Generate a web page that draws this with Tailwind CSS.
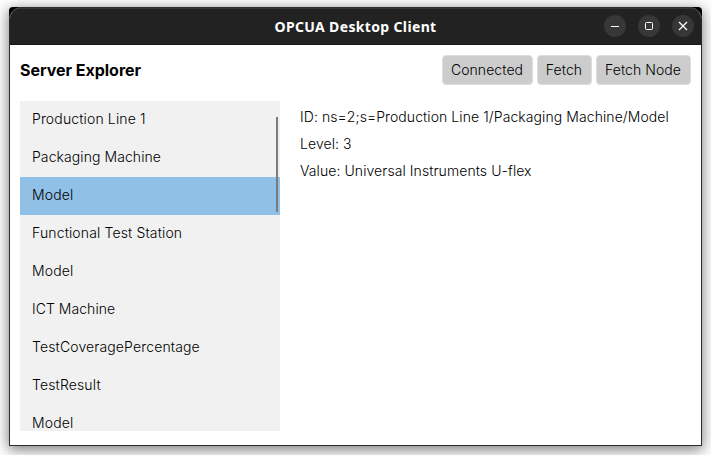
<!DOCTYPE html>
<html lang="en">
<head>
<meta charset="utf-8">
<title>OPCUA Desktop Client</title>
<script src="https://cdn.jsdelivr.net/npm/@tailwindcss/browser@4"></script>
</head>
<body class="h-[455px] w-[711px] overflow-hidden bg-white pt-[7px] pl-[9px] font-['Inter',sans-serif] text-[14px] font-light text-black">
<div class="h-[439px] w-[693px] rounded-t-[4px] bg-black shadow-[0_3px_14px_1px_rgba(0,0,0,0.5)]">
  <div class="flex h-full flex-col overflow-hidden rounded-t-[12px] border border-[#2d2d2d] bg-white">
    <header class="relative flex h-[37px] shrink-0 items-center justify-center border-t border-b border-t-[#373737] border-b-[#191919] bg-[#222222]">
      <h1 class="font-['Noto_Sans',sans-serif] text-[14px] font-bold tracking-[0.35px] whitespace-nowrap text-white">OPCUA Desktop Client</h1>
      <div class="absolute top-[6px] right-[7px] flex gap-3">
        <span class="flex size-[22px] items-center justify-center rounded-full bg-[#373737]"><svg class="size-[22px]" viewBox="0 0 22 22" fill="none" stroke="#fff"><path d="M7 11.5h8"/></svg></span>
        <span class="flex size-[22px] items-center justify-center rounded-full bg-[#373737]"><svg class="size-[22px]" viewBox="0 0 22 22" fill="none" stroke="#fff"><rect x="7.5" y="7.5" width="7" height="7" rx="1"/></svg></span>
        <span class="flex size-[22px] items-center justify-center rounded-full bg-[#373737]"><svg class="size-[22px]" viewBox="0 0 22 22" fill="none" stroke="#fff" stroke-width="1.2"><path d="M7 7l8 8M15 7l-8 8"/></svg></span>
      </div>
    </header>
    <main class="flex flex-1 flex-col px-[10px] pt-[10px] tracking-[0.08px]">
      <div class="flex h-[30px] items-center justify-between">
        <h2 class="text-[16px] font-bold tracking-[-0.02px]">Server Explorer</h2>
        <div class="flex gap-1 whitespace-nowrap">
          <button class="h-[30px] w-[91px] rounded-[4px] border border-[#dedede] bg-[#cccccc] pr-px pb-px">Connected</button>
          <button class="h-[30px] w-[55px] rounded-[4px] border border-[#dedede] bg-[#cccccc] pr-px pb-px">Fetch</button>
          <button class="h-[30px] w-[95px] rounded-[4px] border border-[#dedede] bg-[#cccccc] pr-px pb-px">Fetch Node</button>
        </div>
      </div>
      <div class="mt-4 flex">
        <div class="relative h-[330px] w-[260px] overflow-hidden bg-[#f1f1f1]">
          <ul class="leading-[36px] tracking-[0.14px]">
            <li class="h-[38px] pl-3">Production Line 1</li>
            <li class="h-[38px] pl-3 tracking-[0.08px]">Packaging Machine</li>
            <li class="h-[38px] bg-[#91c0e7] pl-3">Model</li>
            <li class="h-[38px] pl-3">Functional Test Station</li>
            <li class="h-[38px] pl-3">Model</li>
            <li class="h-[38px] pl-3 tracking-[0.04px]">ICT Machine</li>
            <li class="h-[38px] pl-3">TestCoveragePercentage</li>
            <li class="h-[38px] pl-3">TestResult</li>
            <li class="h-[38px] pl-3">Model</li>
          </ul>
          <div class="absolute top-4 right-[2px] h-[95px] w-[2px] bg-[#7b7b7b]"></div>
        </div>
        <div class="ml-5 pt-[2px] leading-[27px] whitespace-nowrap">
          <p>ID: ns=2;s=Production Line 1/Packaging Machine/Model</p>
          <p>Level: 3</p>
          <p>Value: Universal Instruments U-flex</p>
        </div>
      </div>
    </main>
  </div>
</div>
</body>
</html>
